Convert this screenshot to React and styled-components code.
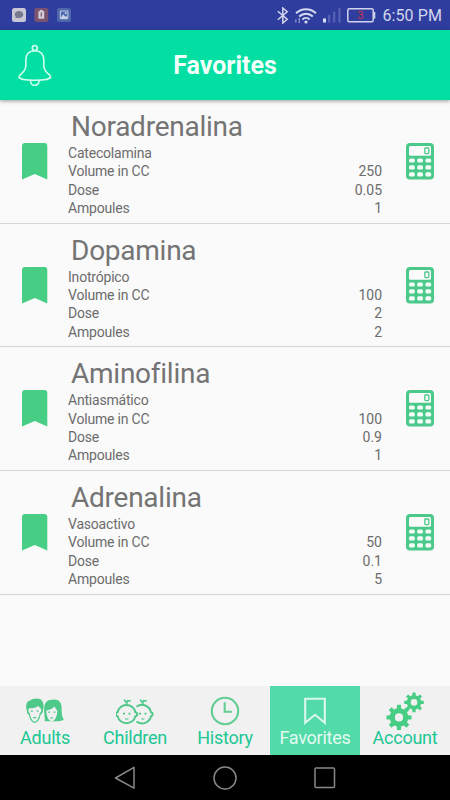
import React from "react";
import styled, {createGlobalStyle} from "styled-components";

const drugs = [
    {name: "Noradrenalina", type: "Catecolamina", volume: "250", dose: "0.05", ampoules: "1"},
    {name: "Dopamina", type: "Inotrópico", volume: "100", dose: "2", ampoules: "2"},
    {name: "Aminofilina", type: "Antiasmático", volume: "100", dose: "0.9", ampoules: "1"},
    {name: "Adrenalina", type: "Vasoactivo", volume: "50", dose: "0.1", ampoules: "5"},
];

const gearPath = (cx, cy, outer, root, teeth = 8) => {
    const step = (Math.PI * 2) / teeth;
    const points = [];
    for (let i = 0; i < teeth; i++) {
        const a = i * step - Math.PI / 2;
        [[root, -0.29], [outer, -0.2], [outer, 0.2], [root, 0.29]].forEach(([r, k]) => {
            points.push(`${(cx + r * Math.cos(a + k * step)).toFixed(2)} ${(cy + r * Math.sin(a + k * step)).toFixed(2)}`);
        });
    }
    return `M${points.join("L")}Z`;
};

const holePath = (cx, cy, r) => `M${cx - r} ${cy}a${r} ${r} 0 1 0 ${r * 2} 0a${r} ${r} 0 1 0 ${-r * 2} 0Z`;

const NotificationIcons = () => (
    <svg width="60" height="16" viewBox="0 0 60 16">
        <rect x="0" y="1" width="14" height="14" rx="2.5" fill="#c9c7d6"/>
        <path d="M7 4c2.6 0 4.2 1.4 4.2 3.5S9.6 11 7 11c-.7 0-1.3 0-1.8-.3l-1.900.5.4-1.500C3 9.100 2.800 8.300 2.800 7.500 2.800 5.400 4.400 4 7 4Z" fill="#767a91"/>
        <rect x="22.300" y="1" width="14" height="14" rx="2.500" fill="#79536f"/>
        <path d="M27.800 3h3v1.300h1.400v7.500h-5.800V4.300h1.400Z" fill="#d5cdda"/>
        <path d="M29.300 5.600v3.800" stroke="#79536f" strokeWidth="1.200"/>
        <rect x="45" y="1" width="14" height="14" rx="2.500" fill="#4d68aa"/>
        <rect x="48.300" y="4" width="7.600" height="7.600" rx=".8" fill="none" stroke="#bfcbe7" strokeWidth="1.100"/>
        <path d="m48.500 11.200 2.700-4 2 2.500 1-1 1.700 2.500ZM52.800 5.300h1.700v1.700h-1.700Z" fill="#c8d3eb"/>
    </svg>
);

const BluetoothIcon = () => (
    <svg width="12" height="17" viewBox="0 0 12 17" fill="none" stroke="#d2d4ec" strokeWidth="1.5">
        <path d="m.8 4.300 9.400 8L5.800 16V1l4.400 3.800-9.400 8"/>
    </svg>
);

const WifiIcon = () => (
    <svg width="22" height="17" viewBox="0 0 22 17" fill="none" stroke="#d8daef" strokeWidth="1.900">
        <path d="M1 6.300a14.300 14.300 0 0 1 20 0M4.200 9.500a9.700 9.700 0 0 1 13.600 0M7.400 12.500a5.200 5.200 0 0 1 7.200 0"/>
        <circle cx="11" cy="15" r="1.600" fill="#d8daef" stroke="none"/>
        <path d="M.8 12.500v3M4.300 11v5" strokeWidth="1.300" stroke="#8e94ca"/>
    </svg>
);

const SignalIcon = () => (
    <svg width="18" height="16" viewBox="0 0 18 16">
        <rect x="0" y="11.500" width="3" height="4" fill="#dcdff2"/>
        <path d="M5 8h2.300v7.500H5ZM10 4.500h2.300v11H10ZM15.300 1h2.300v14.500h-2.300Z" fill="#5660b2"/>
    </svg>
);

const BatteryIcon = () => (
    <svg width="29" height="15" viewBox="0 0 29 15">
        <rect x=".8" y=".8" width="25.400" height="13" rx="1.500" fill="none" stroke="#d0d3eb" strokeWidth="1.500"/>
        <path d="M26.500 4h1.800v6.600h-1.800Z" fill="#d0d3eb"/>
        <text x="13.500" y="11.200" textAnchor="middle" fontSize="11" fill="#cf3048">3</text>
    </svg>
);

const BellIcon = () => (
    <svg width="36" height="42" viewBox="0 0 36 42" fill="none" stroke="#d2fff0" strokeWidth="1.600" strokeLinejoin="round">
        <circle cx="17.800" cy="4" r="2.500"/>
        <path d="M17.800 6.700C11.800 6.700 8.800 10.800 8.800 16v5.500c0 4.500-2 6.300-4.500 8.300-1.300 1-2.500 2-2.300 3.200.4 2 7 3.200 15.800 3.200s15.400-1.200 15.800-3.200c.2-1.200-1-2.200-2.300-3.200-2.500-2-4.500-3.800-4.500-8.300V16c0-5.200-3-9.300-9-9.300Z"/>
        <path d="M13.600 36.200v1a4.200 4.200 0 0 0 8.400 0v-1"/>
    </svg>
);

const BookmarkIcon = () => (
    <svg width="26" height="37" viewBox="0 0 26 37">
        <path d="M3 0h19.500Q25.300 0 25.300 3v33.500L12.800 31 0 36.500V3Q0 0 3 0Z" fill="#48cd85"/>
    </svg>
);

const CalculatorIcon = () => (
    <svg width="28" height="37" viewBox="0 0 28 37">
        <rect width="28" height="36.500" rx="4" fill="#4bc98a"/>
        <rect x="3" y="3" width="22" height="9.800" rx="1.500" fill="#fafafa"/>
        <rect x="18.800" y="5" width="4" height="5.600" rx=".8" fill="none" stroke="#4bc98a" strokeWidth="1.300"/>
        {[15.4, 22.3, 29.3].map(y => (
            [3, 11.2, 19.4].map(x => (
                <rect key={`${x}-${y}`} x={x} y={y} width="5.800" height="4.200" rx="1.500" fill="#f4fdf8"/>
            ))
        ))}
    </svg>
);

const AdultsIcon = () => (
    <svg width="38" height="26" viewBox="0 0 38 26">
        <path d="M18.700 23c.4-4-.9-7-.5-13 .3-5.500 3.300-8.500 7.800-8.200 6-1.300 9.700 2.400 9.600 8.200 0 5.500.4 9 2.200 11.800-3 1.600-7.800 1.900-19.100 1.200Z" fill="#4fc989"/>
        <path d="M20.300 12.500c4-.8 6.700-2.200 8.200-4.300 1 2.600 2 3.300 2.800 4.300 0 5.800-2.300 10.700-5.500 10.700s-5.300-4.700-5.500-10.700Z" fill="#f1f1f1"/>
        <path d="M.9 13C-.6 8-.2 3.500 4.500 2.300 7-.2 15.500-.6 16.700 4c1.300 3 1 6 .2 9-.2 2-.9 3.100-2.200 3.600-1 4.900-3.400 8.500-6 8.500s-5-3.600-5.900-8.500C1.500 16.200.9 15 .9 13Z" fill="#4fc989"/>
        <path d="M3.200 10.200c4 .1 7-.5 9.200-2.500.7 1.400 1.500 2 2.300 2.800.9.600.8 3.700-.9 4.600-.8 4.700-2.800 8.600-5.100 8.600s-4.200-3.900-5-8.600c-1.700-.9-1.700-4-.5-4.900Z" fill="#f1f1f1"/>
        <path d="M4.800 13.200h2M10.600 13.200h2M22.200 14.200h1.900M27.500 14.200h1.900M7 19.300q1.700 1 3.300 0M24.300 19.700q1.400.8 2.800 0" fill="none" stroke="#4fc989" strokeWidth="1.300"/>
    </svg>
);

const ChildrenIcon = () => (
    <svg width="38" height="27" viewBox="0 0 38 27" fill="none" stroke="#4fc989" strokeWidth="2">
        <path d="M20.500 8.700a9.200 9.200 0 0 1 14.500 5.500c2.300.4 2.300 3.600 0 4.100a9.200 9.200 0 0 1-14.500 5.200"/>
        <path d="M10.500 6.900a9 9 0 0 1 8.900 7.300c2.400.3 2.400 3.800 0 4.100a9.200 9.200 0 0 1-17.800 0c-2.300-.3-2.300-3.800 0-4.100a9 9 0 0 1 8.900-7.300Z"/>
        <path d="M10.700 7c-.2-2.200-.2-3.500 1.200-5M11 3.800C9.400 4.200 8.500 3 8.600 1.400M11.600 2.800l3 .1M26.700 7c-.2-2.200-.2-3.500 1.200-5M27 3.800c-1.600.4-2.500-.8-2.400-2.400M27.600 2.800l3 .1" strokeWidth="1.700"/>
        <path d="M7 15.600h2M12.500 15.600h2M23 15.600h2M28.500 15.600h2" strokeWidth="1.900"/>
        <path d="M9 20.800q1.700.7 3.400 0M25.400 20.800q1.600.7 3 0" strokeWidth="1.200"/>
    </svg>
);

const HistoryIcon = () => (
    <svg width="30" height="30" viewBox="0 0 30 30" fill="none" stroke="#61cd92">
        <circle cx="15" cy="15" r="13.200" strokeWidth="2.100"/>
        <path d="M14.700 6.300v9.400H22" strokeWidth="2.100"/>
    </svg>
);

const FavoritesIcon = () => (
    <svg width="24" height="28" viewBox="0 0 24 28" fill="none" stroke="#dcf8ec" strokeWidth="2.100">
        <path d="M2.200 1.800h19.600v24L12 17.800l-9.800 8Z"/>
    </svg>
);

const AccountIcon = () => (
    <svg width="40" height="38" viewBox="0 0 40 38" fill="#48cd85" fillRule="evenodd">
        <path d={gearPath(14, 25.4, 12.7, 9.4) + holePath(14, 25.4, 4.1)}/>
        <path d={gearPath(29, 10.4, 9.9, 7.3) + holePath(29, 10.4, 3.3)}/>
    </svg>
);

const tabs = [
    {label: "Adults", icon: <AdultsIcon/>},
    {label: "Children", icon: <ChildrenIcon/>},
    {label: "History", icon: <HistoryIcon/>},
    {label: "Favorites", icon: <FavoritesIcon/>, active: true},
    {label: "Account", icon: <AccountIcon/>},
];

const DrugRow = ({drug}) => (
    <Row>
        <RowIcon><BookmarkIcon/></RowIcon>
        <RowBody>
            <DrugName>{drug.name}</DrugName>
            <Line><LineLabel>{drug.type}</LineLabel></Line>
            <Line><LineLabel>Volume in CC</LineLabel><span>{drug.volume}</span></Line>
            <Line><LineLabel>Dose</LineLabel><span>{drug.dose}</span></Line>
            <Line><LineLabel>Ampoules</LineLabel><span>{drug.ampoules}</span></Line>
        </RowBody>
        <RowIcon><CalculatorIcon/></RowIcon>
    </Row>
);

const App = () => {
    return (
        <>
            <GlobalStyle/>
            <Screen>
                <StatusBar>
                    <NotificationIcons/>
                    <StatusIcons>
                        <BluetoothIcon/>
                        <WifiIcon/>
                        <SignalIcon/>
                        <BatteryIcon/>
                        <Clock>6:50 PM</Clock>
                    </StatusIcons>
                </StatusBar>

                <Header>
                    <BellIcon/>
                    <HeaderTitle>Favorites</HeaderTitle>
                </Header>

                <List>
                    {drugs.map(drug => <DrugRow key={drug.name} drug={drug}/>)}
                </List>

                <TabBar>
                    {tabs.map(tab => (
                        <Tab key={tab.label} $active={tab.active}>
                            <TabIcon>{tab.icon}</TabIcon>
                            <TabLabel>{tab.label}</TabLabel>
                        </Tab>
                    ))}
                </TabBar>

                <NavBar>
                    <svg width="22" height="24" viewBox="0 0 22 24"><path d="M20 1.300v20.900L1.500 12Z" fill="none" stroke="#888" strokeWidth="1.500" strokeLinejoin="round"/></svg>
                    <svg width="24" height="24" viewBox="0 0 24 24"><circle cx="12" cy="12" r="11" fill="none" stroke="#888" strokeWidth="1.500"/></svg>
                    <svg width="22" height="24" viewBox="0 0 22 24"><rect x="1" y="2" width="19.500" height="19.500" rx="1" fill="none" stroke="#888" strokeWidth="1.500"/></svg>
                </NavBar>
            </Screen>
        </>
    );
};

export default App;

const GlobalStyle = createGlobalStyle`
    * {
        box-sizing: border-box;
    }

    body {
        margin: 0;
        font-family: Roboto, sans-serif;
    }

    svg {
        display: block;
        flex: none;
    }
`;

const Screen = styled.div`
    display: flex;
    flex-direction: column;
    width: 450px;
    height: 800px;
    overflow: hidden;
    background: #fafafa;
`;

const StatusBar = styled.div`
    display: flex;
    align-items: center;
    justify-content: space-between;
    flex: none;
    height: 30px;
    padding: 0 8px 0 12px;
    background: #2f3e9e;
`;

const StatusIcons = styled.div`
    display: flex;
    align-items: center;
    gap: 6px;
`;

const Clock = styled.span`
    padding-top: 2px;
    color: #d3d6ee;
    font-size: 16px;
    line-height: 20px;
    letter-spacing: 0.1px;
    white-space: nowrap;
`;

const Header = styled.header`
    display: grid;
    grid-template-columns: 54px 1fr 54px;
    align-items: center;
    flex: none;
    height: 70px;
    padding: 0 17px;
    background: #03dfa2;
    box-shadow: 0 1px 4px rgba(0, 0, 0, 0.4);
    z-index: 1;
`;

const HeaderTitle = styled.h1`
    margin: 0;
    padding-top: 2px;
    color: #f3fffb;
    font-size: 25px;
    font-weight: 700;
    line-height: 30px;
    text-align: center;
`;

const List = styled.div`
    flex: 1;
`;

const Row = styled.div`
    display: grid;
    grid-template-columns: 68px 314px 68px;
    height: 123.7px;
    border-bottom: 1px solid #d6d6d6;
`;

const RowIcon = styled.div`
    display: flex;
    justify-content: center;
    padding: 43px 0 0 1px;

    &:last-child {
        padding-left: 8px;
    }
`;

const RowBody = styled.div`
    padding-top: 9px;
`;

const DrugName = styled.h2`
    margin: 0;
    padding-left: 3px;
    color: #747474;
    font-size: 28px;
    font-weight: 400;
    line-height: 35px;
    letter-spacing: -0.25px;
`;

const Line = styled.div`
    display: flex;
    justify-content: space-between;
    color: #6c6c6c;
    font-size: 14px;
    line-height: 18.3px;
`;

const LineLabel = styled.span`
    letter-spacing: -0.2px;
`;

const TabBar = styled.nav`
    display: grid;
    grid-template-columns: repeat(5, 90px);
    flex: none;
    height: 69px;
    background: #f1f1f1;
`;

const Tab = styled.div`
    display: flex;
    flex-direction: column;
    align-items: center;
    padding-top: 5px;
    color: ${props => props.$active ? "#e4fbf2" : "#1cc793"};
    background: ${props => props.$active ? "#52daa8" : "transparent"};
`;

const TabIcon = styled.div`
    display: flex;
    align-items: center;
    height: 40px;
`;

const TabLabel = styled.span`
    margin-top: -4px;
    font-size: 18px;
    line-height: 22px;
    letter-spacing: -0.25px;
`;

const NavBar = styled.div`
    display: flex;
    align-items: center;
    justify-content: space-between;
    flex: none;
    height: 45px;
    padding: 0 114px;
    background: #000;
`;
